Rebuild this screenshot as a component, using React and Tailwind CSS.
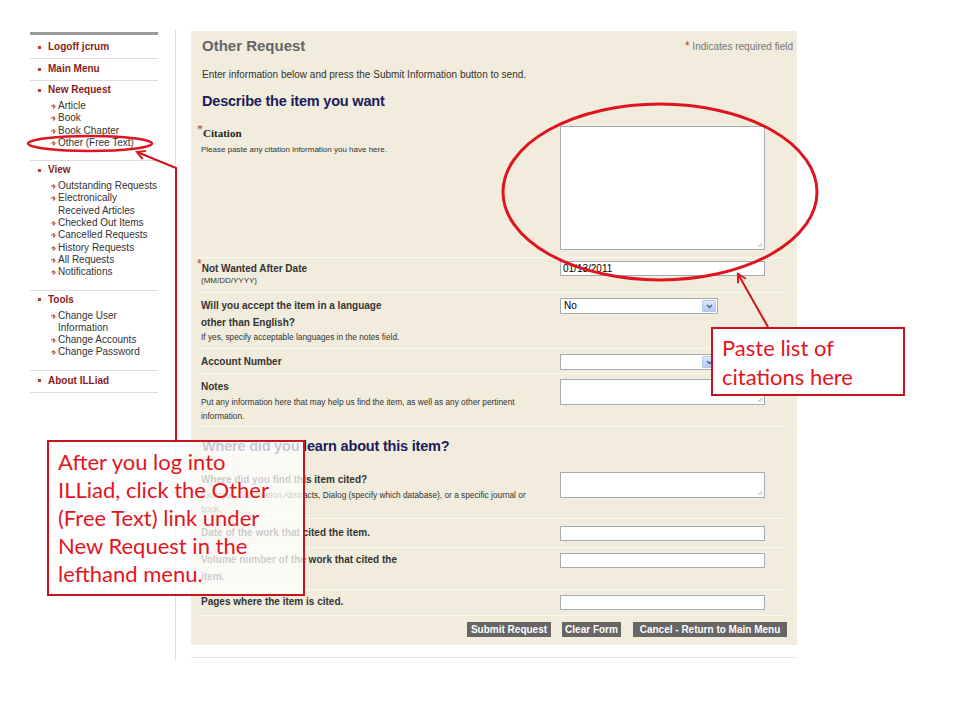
import React from 'react';

const menu = [
	{ title: 'Logoff jcrum' },
	{ title: 'Main Menu' },
	{ title: 'New Request', items: [['Article'], ['Book'], ['Book Chapter'], ['Other (Free Text)']] },
	{
		title: 'View',
		items: [
			['Outstanding Requests'],
			['Electronically', 'Received Articles'],
			['Checked Out Items'],
			['Cancelled Requests'],
			['History Requests'],
			['All Requests'],
			['Notifications'],
		],
	},
	{ title: 'Tools', items: [['Change User', 'Information'], ['Change Accounts'], ['Change Password']] },
	{ title: 'About ILLiad' },
];

function SubArrow() {
	return (
		<svg width="5" height="5" viewBox="0 0 5 5" className="mt-[4px] mr-[2px] shrink-0">
			<path d="M0 2h3M2 0.5l2 2-2 2" stroke="#d23a3a" strokeWidth="1.1" fill="none" />
		</svg>
	);
}

function Sidebar() {
	return (
		<div className="w-[128px] mt-[2px] shrink-0">
			<div className="h-[3px] bg-[#9a9a9a]" />
			{menu.map((g, gi) => (
				<div
					key={g.title}
					className={`border-b border-[#dcdcdc] ${g.items ? 'pt-[3px] pb-[11px]' : 'pt-[4px] pb-[5px]'} ${gi === 0 ? '!pt-[6px]' : ''}`}
				>
					<div className="flex items-center pl-[8px] h-[12px] text-[10px] leading-[12px] font-bold text-[#8b1c1c]">
						<span className="w-[3px] h-[3px] bg-[#c23a3a] mr-[7px]" />
						{g.title}
					</div>
					{g.items && (
						<ul className="mt-[4px] pl-[21px]">
							{g.items.map((lines) => (
								<li key={lines[0]} className="flex text-[10px] leading-[12.3px] text-[#333] whitespace-nowrap">
									<SubArrow />
									<span>
										{lines.map((l, i) => (
											<React.Fragment key={l}>
												{i > 0 && <br />}
												{l}
											</React.Fragment>
										))}
									</span>
								</li>
							))}
						</ul>
					)}
				</div>
			))}
		</div>
	);
}

function TextBox({ value = '', w = 'w-[205px]' }) {
	return (
		<div className={`${w} h-[15px] bg-white border border-[#a5acb2] text-[10px] leading-[13px] px-[2px] text-black`}>
			{value}
		</div>
	);
}

function TextArea({ h }) {
	return (
		<div className={`relative w-[205px] ${h} bg-white border border-[#a5acb2]`}>
			<svg width="6" height="6" viewBox="0 0 6 6" className="absolute right-[1px] bottom-[1px]">
				<path d="M5 1L1 5M5 3.5L3.5 5" stroke="#9a9a9a" strokeWidth="0.8" />
			</svg>
		</div>
	);
}

function Select({ value = '' }) {
	return (
		<div className="flex w-[158px] h-[16px] bg-white border border-[#a5acb2] text-[10px] leading-[14px] text-black">
			<span className="flex-1 px-[3px]">{value}</span>
			<span className="flex items-center justify-center w-[14px] m-[1px] bg-gradient-to-b from-[#dfe8fd] to-[#b4c8f5] border border-[#b5c6ef] rounded-[1px]">
				<svg width="7" height="5" viewBox="0 0 7 5">
					<path d="M1 1l2.5 2.5L6 1" stroke="#4d6185" strokeWidth="1.4" fill="none" />
				</svg>
			</span>
		</div>
	);
}

function Star() {
	return <span className="relative -top-[4px] text-[12px] text-[#c0392b] font-normal">*</span>;
}

function Row({ h, lp, rp, children, field }) {
	return (
		<div className={`flex ${h} border-b border-[#faf8f0]`}>
			<div className={`w-[363px] pl-[4px] ${lp}`}>{children}</div>
			<div className={rp}>{field}</div>
		</div>
	);
}

const label = 'text-[10px] font-bold text-[#333] leading-[13px]';
const desc = 'text-[8.3px] text-[#333] leading-[14px]';

function Panel() {
	return (
		<div className="w-[606px] h-[614px] bg-[#f1ecdb] pt-[6px]">
			<div className="flex justify-between pl-[11px] pr-[4px]">
				<h1 className="text-[15px] leading-[18px] font-bold text-[#666]">Other Request</h1>
				<p className="text-[10px] leading-[18px] text-[#777]">
					<span className="text-[12px] text-[#c0392b]">*</span> Indicates required field
				</p>
			</div>
			<p className="mt-[13px] pl-[11px] text-[10px] leading-[12px] text-[#333]">
				Enter information below and press the Submit Information button to send.
			</p>
			<h2 className="mt-[11px] pl-[11px] text-[14.5px] leading-[18px] font-bold text-[#1b1b5e] tracking-[-0.2px]">
				Describe the item you want
			</h2>

			<div className="mt-[9px] ml-[6px] mr-[10px]">
				<Row h="h-[139px]" lp="pt-[8px] !pl-0" rp="pt-[7px]" field={<TextArea h="h-[124px]" />}>
					<div className="text-[11px] leading-[13px] font-bold text-[#222] font-['Liberation_Serif',serif]">
						<Star />
						Citation
					</div>
					<div className="pl-[4px] text-[8px] leading-[19px] text-[#333]">Please paste any citation information you have here.</div>
				</Row>
				<Row h="h-[35px]" lp="pt-[4px] !pl-0" rp="pt-[3px]" field={<TextBox value="01/13/2011" />}>
					<div className={label}>
						<Star />
						Not Wanted After Date
					</div>
					<div className="pl-[4px] text-[8px] leading-[12px] text-[#333]">(MM/DD/YYYY)</div>
				</Row>
				<Row h="h-[56px]" lp="pt-[4px]" rp="pt-[5px]" field={<Select value="No" />}>
					<div className={`${label} !leading-[17px]`}>
						Will you accept the item in a language
						<br />
						other than English?
					</div>
					<div className="text-[8.3px] leading-[12px] text-[#333]">If yes, specify acceptable languages in the notes field.</div>
				</Row>
				<Row h="h-[25px]" lp="pt-[6px]" rp="pt-[5px]" field={<Select />}>
					<div className={label}>Account Number</div>
				</Row>
				<Row h="h-[53px]" lp="pt-[6px]" rp="pt-[5px]" field={<TextArea h="h-[26px]" />}>
					<div className={label}>Notes</div>
					<div className={`${desc} mt-[2px]`}>
						Put any information here that may help us find the item, as well as any other pertinent
						<br />
						information.
					</div>
				</Row>

				<h2 className="h-[37px] pt-[10px] pl-[5px] text-[14.5px] leading-[18px] font-bold text-[#1b1b5e] tracking-[-0.2px]">
					Where did you learn about this item?
				</h2>

				<Row h="h-[55px]" lp="pt-[9px]" rp="pt-[8px]" field={<TextArea h="h-[26px]" />}>
					<div className={label}>Where did you find this item cited?</div>
					<div className={`${desc} mt-[2px]`}>
						Example: Dissertation Abstracts, Dialog (specify which database), or a specific journal or
						<br />
						book.
					</div>
				</Row>
				<Row h="h-[29px]" lp="pt-[7px]" rp="pt-[7px]" field={<TextBox />}>
					<div className={label}>Date of the work that cited the item.</div>
				</Row>
				<Row h="h-[42px]" lp="pt-[3px]" rp="pt-[5px]" field={<TextBox />}>
					<div className={`${label} !leading-[17px]`}>
						Volume number of the work that cited the
						<br />
						item.
					</div>
				</Row>
				<Row h="h-[26px]" lp="pt-[5px]" rp="pt-[5px]" field={<TextBox />}>
					<div className={label}>Pages where the item is cited.</div>
				</Row>

				<div className="flex justify-end pt-[6px]">
					<button className="h-[15px] w-[84px] bg-[#666] text-white text-[10px] font-bold leading-[15px]">Submit Request</button>
					<button className="h-[15px] w-[59px] ml-[11px] bg-[#666] text-white text-[10px] font-bold leading-[15px]">Clear Form</button>
					<button className="h-[15px] w-[154px] ml-[12px] bg-[#666] text-white text-[10px] font-bold leading-[15px]">
						Cancel - Return to Main Menu
					</button>
				</div>
			</div>
		</div>
	);
}

function Annotations() {
	return (
		<svg width="960" height="720" className="absolute left-0 top-0 pointer-events-none">
			<defs>
				<marker id="ah" markerWidth="12" markerHeight="12" refX="9" refY="6" orient="auto" markerUnits="userSpaceOnUse">
					<path d="M1 1.5L9 6L1 10.5" fill="none" stroke="#e0141e" strokeWidth="2" />
				</marker>
			</defs>
			<ellipse cx="660" cy="192" rx="157" ry="88" fill="none" stroke="#e0141e" strokeWidth="3" />
			<ellipse cx="90" cy="143.5" rx="62" ry="7.5" fill="none" stroke="#e0141e" strokeWidth="2.5" />
			<polyline points="176,440 176,168 137,152" fill="none" stroke="#d0141e" strokeWidth="2" markerEnd="url(#ah)" />
			<line x1="768" y1="327" x2="738" y2="274" stroke="#d0141e" strokeWidth="2" markerEnd="url(#ah)" />
		</svg>
	);
}

export default function App() {
	return (
		<div className="relative w-[960px] h-[720px] bg-white overflow-hidden font-['Liberation_Sans',Arial,sans-serif]">
			<div className="flex pt-[30px] pl-[30px]">
				<Sidebar />
				<div className="ml-[17px] pt-[1px] pl-[15px] pb-[2px] border-l border-[#dedede]">
					<Panel />
					<div className="mt-[12px] h-px w-[606px] bg-[#e4e4e4]" />
				</div>
			</div>

			<Annotations />

			{/* callouts */}
			<div className="absolute left-[47px] top-[440px] w-[258px] h-[156px] border-2 border-[#c8141e] bg-white/75 pl-[9px] pt-[6px] text-[22px] leading-[28px] text-[#e3141e] font-['Lato',sans-serif] whitespace-nowrap">
				After you log into
				<br />
				ILLiad, click the Other
				<br />
				(Free Text) link under
				<br />
				New Request in the
				<br />
				lefthand menu.
			</div>
			<div className="absolute left-[711px] top-[327px] w-[194px] h-[69px] border-2 border-[#c8141e] bg-white pl-[9px] pt-[4px] text-[22px] leading-[29px] text-[#e3141e] font-['Lato',sans-serif] whitespace-nowrap">
				Paste list of
				<br />
				citations here
			</div>
		</div>
	);
}
